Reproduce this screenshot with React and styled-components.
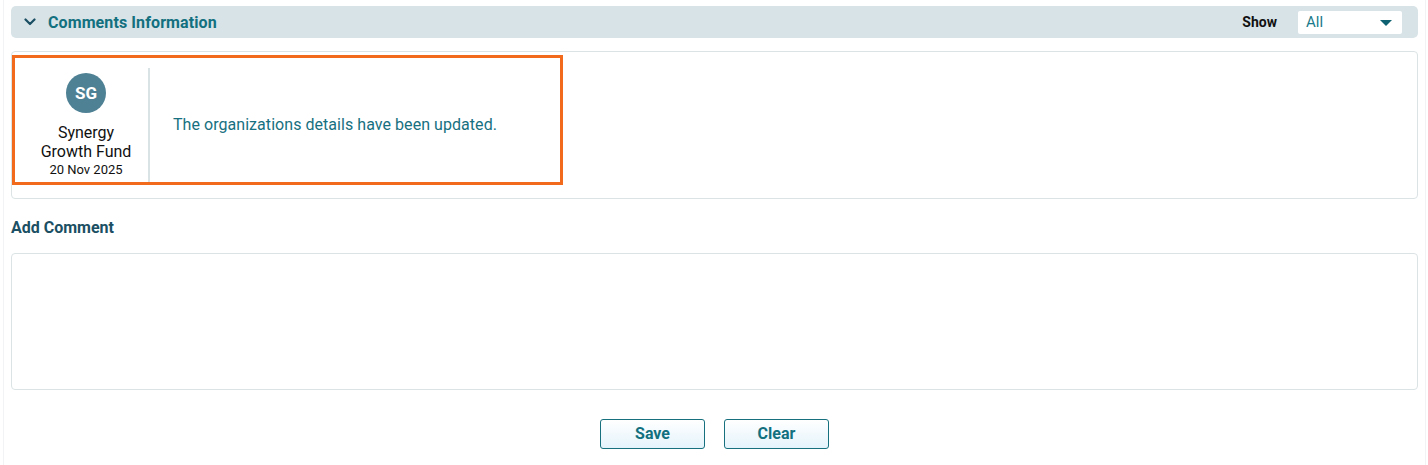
import styled, { createGlobalStyle } from "styled-components";

const GlobalStyle = createGlobalStyle`
	body {
		margin: 0;
		background: #fff;
		font-family: Roboto, "Liberation Sans", Arial, sans-serif;
	}
`;

const Panel = styled.div`
	margin: 0 2px 0 3px;
	border-left: 1px solid #f1f3f4;
	border-right: 1px solid #f1f3f4;
	padding: 6px 7px 17px 7px;
	height: 442px;
`;

const Header = styled.div`
	display: flex;
	align-items: center;
	height: 32px;
	padding: 0 16px 0 13px;
	background-color: #d8e3e7;
	border-radius: 5px;
`;

const Title = styled.div`
	flex: 1;
	display: flex;
	align-items: center;
	gap: 12px;
	font-weight: bold;
	font-size: 16px;
	letter-spacing: 0.1px;
	color: #12707f;
`;

const ShowLabel = styled.span`
	font-weight: bold;
	font-size: 14px;
	color: #111;
	margin-right: 21px;
`;

const Select = styled.div`
	width: 104px;
	height: 23px;
	box-sizing: border-box;
	background: #fff;
	border-radius: 2px;
	display: flex;
	align-items: center;
	justify-content: space-between;
	padding: 0 10px 0 8px;
	font-size: 15px;
	color: #1a7a8a;
`;

const Caret = styled.span`
	width: 0;
	height: 0;
	border-left: 6px solid transparent;
	border-right: 6px solid transparent;
	border-top: 6px solid #0d6170;
	margin-top: 2px;
`;

const Box = styled.div`
	margin-top: ${props => props.top || 0}px;
	border: 1px solid #dbe3e5;
	border-radius: 4px;
	box-sizing: border-box;
	height: ${props => props.height}px;
	padding: ${props => props.pad || "0"};
`;

const Card = styled.div`
	width: 551px;
	height: 130px;
	box-sizing: border-box;
	border: 3px solid #f26b1d;
	display: flex;
	padding: 10px 0 0 9px;
`;

const Author = styled.div`
	width: 124px;
	border-right: 2px solid #d9e2e5;
	display: flex;
	flex-direction: column;
	align-items: center;
	padding-top: 5px;
	color: #111;
`;

const Avatar = styled.div`
	width: 40px;
	height: 40px;
	border-radius: 50%;
	background: #4f8194;
	color: #fff;
	font-weight: bold;
	font-size: 17px;
	display: flex;
	align-items: center;
	justify-content: center;
	margin-bottom: 10px;
`;

const Name = styled.div`
	font-size: 16px;
	line-height: 19px;
	text-align: center;
`;

const Date = styled.div`
	font-size: 13px;
	line-height: 16px;
	margin-top: 1px;
`;

const Message = styled.div`
	display: flex;
	align-items: center;
	padding: 0 0 2px 23px;
	font-size: 16px;
	letter-spacing: 0.05px;
	color: #17707f;
`;

const Label = styled.div`
	margin-top: 19px;
	font-weight: bold;
	font-size: 16px;
	line-height: 20px;
	color: #1b4f63;
`;

const Actions = styled.div`
	display: flex;
	justify-content: center;
	gap: 19px;
	margin-top: 29px;
`;

const Button = styled.button`
	width: 105px;
	height: 30px;
	border: 1px solid #17707e;
	border-radius: 3px;
	background: linear-gradient(#ffffff, #e4f3fb);
	font-family: inherit;
	font-weight: bold;
	font-size: 16px;
	color: #12707f;
	padding-bottom: 2px;
	cursor: pointer;
`;

const Chevron = () => (
	<svg width="12" height="8" viewBox="0 0 12 8">
		<path d="M1.5 1.5 L6 6 L10.5 1.5" fill="none" stroke="#1b4f63" strokeWidth="2.2" strokeLinecap="round" strokeLinejoin="round" />
	</svg>
);

const App = () => {
	return (
		<>
			<GlobalStyle />
			<Panel>
				<Header>
					<Title>
						<Chevron />
						Comments Information
					</Title>
					<ShowLabel>Show</ShowLabel>
					<Select>
						All
						<Caret />
					</Select>
				</Header>
				<Box top={13} height={148} pad="3px 0 0 0">
					<Card>
						<Author>
							<Avatar>SG</Avatar>
							<Name>Synergy<br />Growth Fund</Name>
							<Date>20 Nov 2025</Date>
						</Author>
						<Message>The organizations details have been updated.</Message>
					</Card>
				</Box>
				<Label>Add Comment</Label>
				<Box top={15} height={137} />
				<Actions>
					<Button>Save</Button>
					<Button>Clear</Button>
				</Actions>
			</Panel>
		</>
	);
};

export default App;
